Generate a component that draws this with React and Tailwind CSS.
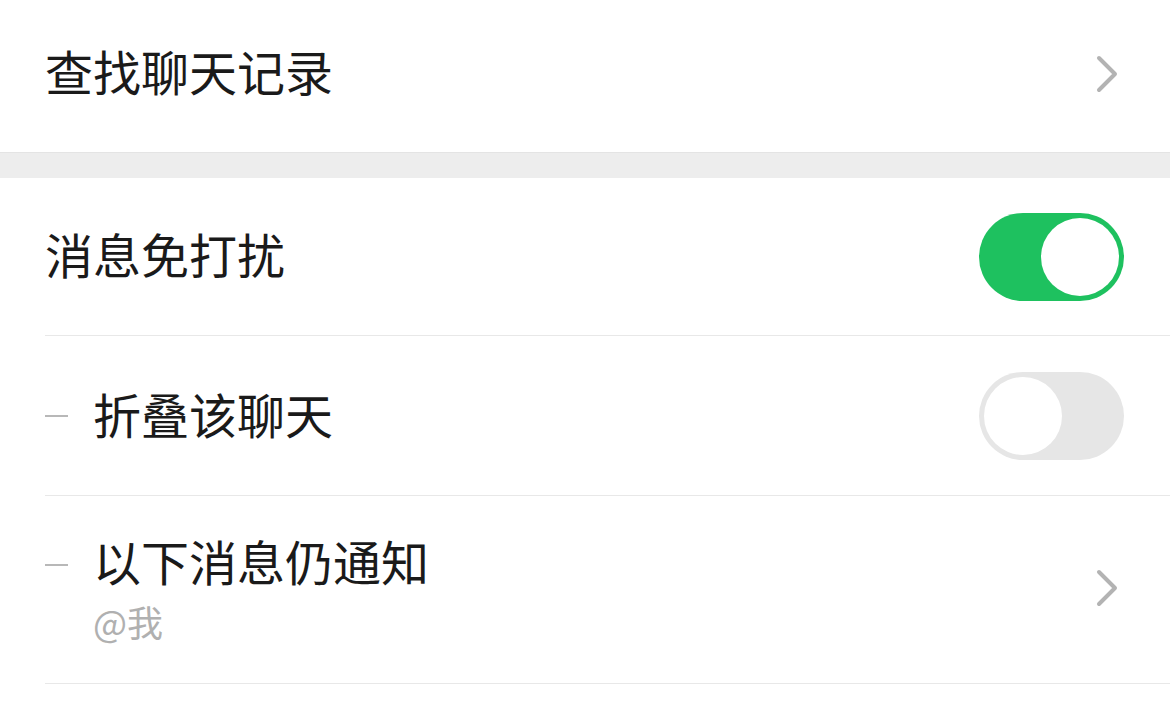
import { useState } from 'react';

const font = { fontFamily: '"Noto Sans CJK SC", "Noto Sans", sans-serif' };

function Chevron() {
  return (
    <svg width="22" height="38" viewBox="0 0 22 38" className="shrink-0 mb-[4px]">
      <polyline points="3,3 19,19 3,35" fill="none" stroke="#b3b3b3" strokeWidth="4" strokeLinecap="round" strokeLinejoin="round" />
    </svg>
  );
}

function Toggle({ on, onClick }) {
  return (
    <button
      onClick={onClick}
      className={`relative w-[145px] h-[88px] rounded-full shrink-0 transition-colors ${on ? 'bg-[#1ec15f]' : 'bg-[#e6e6e6]'}`}
    >
      <span
        className={`absolute top-[5px] w-[78px] h-[78px] rounded-full bg-white transition-all ${on ? 'left-[62px]' : 'left-[5px]'}`}
      />
    </button>
  );
}

function Dash() {
  return <div className="w-[23px] h-[2px] bg-[#b8b8b8] mr-[25px] shrink-0" />;
}

export default function App() {
  const [mute, setMute] = useState(true);
  const [fold, setFold] = useState(false);

  return (
    <div className="w-[1170px] h-[711px] bg-white text-[#1a1a1a] overflow-hidden" style={font}>
      {/* search history */}
      <div className="h-[152px] flex items-center justify-between pl-[45px] pr-[52px]">
        <span className="text-[48px] leading-none mb-[12px]">查找聊天记录</span>
        <Chevron />
      </div>

      <div className="h-[26px] bg-[#ededed] border-t border-[#e4e4e4]" />

      <div className="ml-[45px]">
        <div className="h-[158px] flex items-center justify-between pr-[46px] border-b border-[#e8e8e8]">
          <span className="text-[48px] leading-none mb-[8px]">消息免打扰</span>
          <Toggle on={mute} onClick={() => setMute(!mute)} />
        </div>

        <div className="h-[160px] flex items-center justify-between pr-[46px] border-b border-[#e8e8e8]">
          <div className="flex items-center">
            <Dash />
            <span className="text-[48px] leading-none mb-[6px]">折叠该聊天</span>
          </div>
          <Toggle on={fold} onClick={() => setFold(!fold)} />
        </div>

        <div className="h-[188px] flex items-center justify-between pr-[52px] border-b border-[#e8e8e8]">
          <div className="flex flex-col">
            <div className="flex items-center">
              <Dash />
              <span className="text-[48px] leading-[52px] pb-[10px]">以下消息仍通知</span>
            </div>
            <span className="ml-[48px] text-[36px] leading-[50px] text-[#b0b0b0]">@我</span>
          </div>
          <Chevron />
        </div>
      </div>
    </div>
  );
}
